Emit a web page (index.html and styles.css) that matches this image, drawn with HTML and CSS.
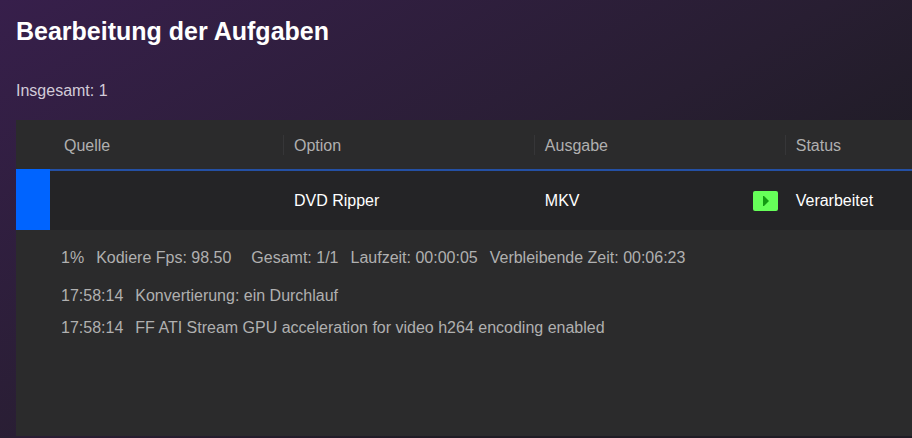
FILE: index.html
```
<!DOCTYPE html>
<html lang="de">
<head>
  <meta charset="UTF-8">
  <title>Bearbeitung der Aufgaben</title>
  <link rel="stylesheet" href="styles.css">
</head>
<body>
  <main class="page">
    <h1 class="title">Bearbeitung der Aufgaben</h1>
    <p class="total">Insgesamt: 1</p>

    <section class="panel">
      <table class="tasks">
        <colgroup>
          <col class="col-marker">
          <col class="col-source">
          <col class="col-option">
          <col class="col-output">
          <col class="col-icon">
          <col class="col-status">
        </colgroup>
        <thead>
          <tr>
            <td></td>
            <th scope="col">Quelle</th>
            <th scope="col" class="divided">Option</th>
            <th scope="col" class="divided" colspan="2">Ausgabe</th>
            <th scope="col" class="divided">Status</th>
          </tr>
        </thead>
        <tbody>
          <tr>
            <td class="marker"></td>
            <td></td>
            <td>DVD Ripper</td>
            <td>MKV</td>
            <td class="state">
              <svg class="play" viewBox="0 0 25 20" aria-hidden="true">
                <rect width="25" height="20" rx="2" fill="#66ff59"/>
                <path d="M10 5h1l5 5-5 5h-1z" fill="#129a12"/>
              </svg>
            </td>
            <td>Verarbeitet</td>
          </tr>
        </tbody>
      </table>

      <!-- Encoder output -->
      <div class="log">
        <p class="progress">
          <span>1%</span>
          <span>Kodiere Fps: 98.50</span>
          <span class="overall">Gesamt: 1/1</span>
          <span>Laufzeit: 00:00:05</span>
          <span>Verbleibende Zeit: 00:06:23</span>
        </p>
        <p><span>17:58:14</span> <span>Konvertierung: ein Durchlauf</span></p>
        <p><span>17:58:14</span> <span>FF ATI Stream GPU acceleration for video h264 encoding enabled</span></p>
      </div>
    </section>
  </main>
</body>
</html>
```
FILE: styles.css
```
* {
  box-sizing: border-box;
}
body {
  margin: 0;
  font: 16px/20px "Liberation Sans", Arial, sans-serif;
  color: #b0b0b0;
  background: linear-gradient(150deg, #371f4b 0%, #281e32 50%, #1f1c25 72%);
}
.page {
  display: flex;
  flex-direction: column;
  min-height: 100vh;
  padding: 16px 0 2px 16px;
}
.title {
  margin: 0;
  font-size: 25px;
  line-height: 30px;
  color: #fff;
}
.total {
  margin: 35px 0 19px;
  color: #d2cbd8;
}
.panel {
  flex: 1;
  background: #2b2b2c;
}

/* Task table */
.tasks {
  width: 100%;
  table-layout: fixed;
  border-collapse: separate;
  border-spacing: 0;
}
.col-marker {
  width: 34px;
}
.col-source {
  width: 26%;
}
.col-option {
  width: 28%;
}
.col-output {
  width: 23%;
}
.col-icon {
  width: 5%;
}
.tasks th,
.tasks td {
  padding: 0 0 0 11px;
  text-align: left;
  font-weight: normal;
}
.tasks th {
  padding-top: 2px;
}
.tasks th:nth-child(2) {
  padding-left: 14px;
}
.tasks thead tr {
  height: 49px;
}
.tasks .divided {
  background: linear-gradient(#363638, #363638) 0 50% / 1px 20px no-repeat;
}
.tasks tbody tr {
  height: 61px;
}
.tasks tbody td {
  border-top: 2px solid #2450a4;
  background: #242426;
  color: #fff;
}
.tasks tbody .marker {
  border-top-color: #0064ff;
  background: #0064ff;
}
.tasks .state {
  padding-left: 13px;
}
.play {
  display: block;
  width: 25px;
  height: 20px;
}

/* Encoder log */
.log {
  padding: 18px 0 0 45px;
}
.log p {
  display: flex;
  flex-wrap: wrap;
  gap: 0 12px;
  margin: 0 0 12px;
}
.log .progress {
  margin-bottom: 18px;
}
.overall {
  margin-left: 8px;
}
```
